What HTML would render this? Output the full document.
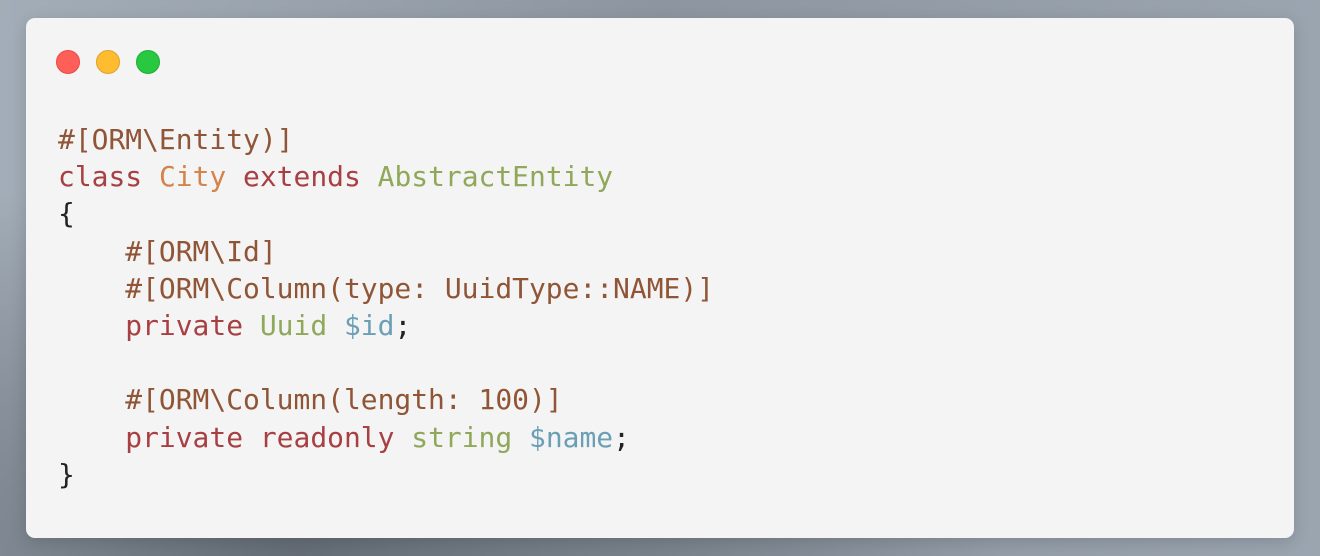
<!DOCTYPE html>
<html><head><style>
html,body{margin:0;padding:0}
body{width:1320px;height:556px;overflow:hidden;background:radial-gradient(ellipse 700px 400px at 300px 556px,#646c75 0%,rgba(100,108,117,0) 100%),linear-gradient(90deg,#a3adb8 0%,#8d96a0 50%,#9ba5b0 100%);position:relative}
.card{position:absolute;left:26px;top:18px;width:1268px;height:520px;background:#f4f4f4;border-radius:9px;box-shadow:0 4px 16px rgba(0,0,0,.15)}
.dot{position:absolute;top:32px;width:24px;height:24px;border-radius:50%;box-sizing:border-box}
pre{position:absolute;left:32px;top:103px;margin:0;font-family:"DejaVu Sans Mono","Liberation Mono",monospace;font-size:27.95px;line-height:37.2px;color:#222}
.a{color:#8f5536}.k{color:#a83f42}.c{color:#d4834a}.t{color:#8fa85a}.v{color:#6a9fb5}
</style></head><body>
<div class="card">
<div class="dot" style="left:30px;background:#ff5f57;border:1px solid #e5494a"></div>
<div class="dot" style="left:70px;background:#febc2e;border:1px solid #e0a12a"></div>
<div class="dot" style="left:110px;background:#28c840;border:1px solid #1fae33"></div>
<pre><span class="a">#[ORM\Entity)]</span>
<span class="k">class</span> <span class="c">City</span> <span class="k">extends</span> <span class="t">AbstractEntity</span>
{
    <span class="a">#[ORM\Id]</span>
    <span class="a">#[ORM\Column(type: UuidType::NAME)]</span>
    <span class="k">private</span> <span class="t">Uuid</span> <span class="v">$id</span>;

    <span class="a">#[ORM\Column(length: 100)]</span>
    <span class="k">private</span> <span class="k">readonly</span> <span class="t">string</span> <span class="v">$name</span>;
}</pre>
</div>
</body></html>
